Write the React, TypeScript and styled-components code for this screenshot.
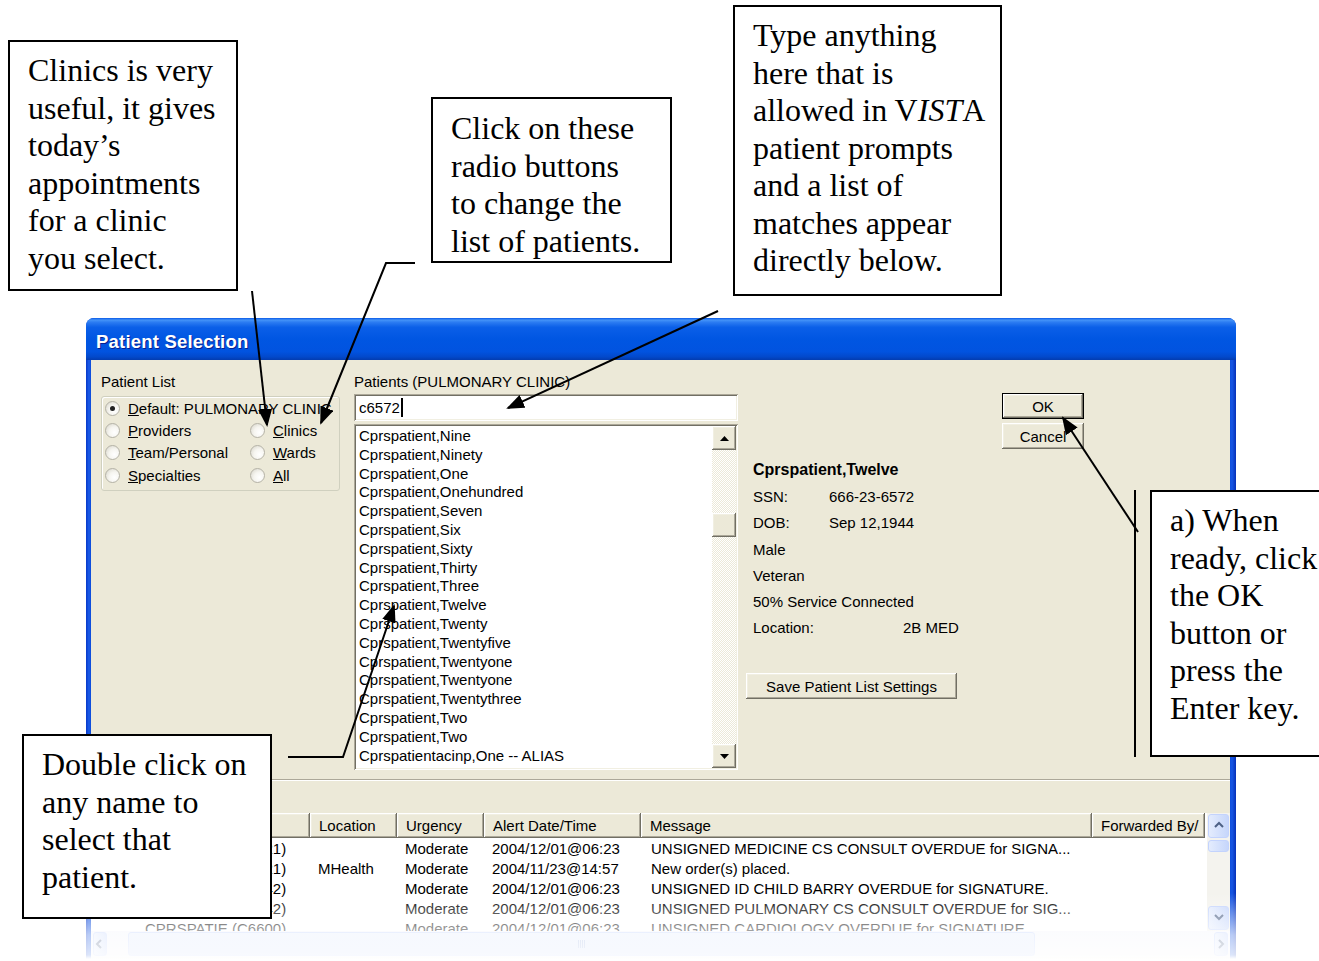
import React from "react";
import styled, { createGlobalStyle } from "styled-components";

const GlobalStyle = createGlobalStyle`
  html, body { margin: 0; padding: 0; background: #fff; }
  body { font-family: "Liberation Sans", Arial, sans-serif; }
`;

const beige = "#ECE9D8";

const raised = `
  background: ${beige};
  box-shadow: inset -1px -1px #716f64, inset 1px 1px #fff, inset -2px -2px #aca899, inset 2px 2px #f1efe2;
`;

const sunken = `
  box-shadow: inset 1px 1px #aca899, inset -1px -1px #fff, inset 2px 2px #716f64, inset -2px -2px #f1efe2;
`;

const Page = styled.div`
  position: relative;
  width: 1319px;
  height: 961px;
  overflow: hidden;
  background: #fff;
  padding: 318px 0 0 86px;
  box-sizing: border-box;
`;

const Window = styled.div`
  width: 1150px;
  height: 645px;
  display: flex;
  flex-direction: column;
  border-radius: 8px 8px 0 0;
  overflow: hidden;
  background: linear-gradient(to right, #0838c8 0px, #1a5cea 3px, #0a4ad8 5px, #0a4ad8 1143px, #1656e4 1146px, #0631b8 1150px);
`;

const TitleBar = styled.div`
  height: 42px;
  flex: none;
  padding: 14px 0 0 10px;
  box-sizing: border-box;
  background: linear-gradient(
    to bottom,
    #0a5ae8 0%,
    #4493f8 5%,
    #2c7cf2 10%,
    #0b5fe8 22%,
    #0056e2 50%,
    #0153e0 80%,
    #0249cc 92%,
    #033cb0 100%
  );
  color: #fff;
  font: bold 18.5px "Liberation Sans", Arial, sans-serif;
  letter-spacing: 0.2px;
  line-height: 20px;
  text-shadow: 1px 1px 0 #0a1f8f;
`;

const Body = styled.div`
  flex: 1;
  margin: 0 6px 0 5px;
  background: ${beige};
  display: flex;
  flex-direction: column;
  font-size: 15px;
  color: #000;
`;

const TopPane = styled.div`
  display: flex;
  height: 410px;
  padding: 13px 0 0 10px;
  box-sizing: border-box;
`;

const Column = styled.div<{ $w?: number; $mr?: number }>`
  display: flex;
  flex-direction: column;
  width: ${(p) => (p.$w ? `${p.$w}px` : "auto")};
  flex: ${(p) => (p.$w ? "none" : "1")};
  margin-right: ${(p) => p.$mr ?? 0}px;
`;

const Label = styled.div<{ $mb: number }>`
  height: 18px;
  line-height: 18px;
  margin-bottom: ${(p) => p.$mb}px;
  white-space: nowrap;
`;

const GroupBox = styled.div`
  height: 95px;
  border: 1px solid #d0d0bf;
  border-radius: 3px;
  box-shadow: inset 1px 1px #fff;
  box-sizing: border-box;
  padding: 0 0 0 3px;
  display: grid;
  grid-template-columns: 145px 1fr;
  grid-auto-rows: 22.3px;
  overflow: hidden;
`;

const RadioItem = styled.label<{ $span?: boolean }>`
  display: flex;
  align-items: center;
  gap: 8px;
  white-space: nowrap;
  grid-column: ${(p) => (p.$span ? "1 / span 2" : "auto")};
`;

const RadioCircle = styled.span<{ $on?: boolean }>`
  position: relative;
  width: 15px;
  height: 15px;
  flex: none;
  border-radius: 50%;
  border: 1px solid #b4b2a6;
  box-sizing: border-box;
  background: radial-gradient(circle at 65% 65%, #ffffff 0%, #f6f5f0 45%, #d4d2c6 100%);
  &::after {
    content: "";
    display: ${(p) => (p.$on ? "block" : "none")};
    position: absolute;
    left: 4px;
    top: 4px;
    width: 5px;
    height: 5px;
    border-radius: 50%;
    background: #222;
  }
`;

const TextInput = styled.div`
  height: 27px;
  margin-bottom: 3px;
  background: #fff;
  ${sunken}
  display: flex;
  align-items: center;
  padding-left: 5px;
  box-sizing: border-box;
`;

const Caret = styled.span`
  display: inline-block;
  width: 2px;
  height: 19px;
  background: #000;
  margin-left: 1px;
`;

const ListBox = styled.div`
  height: 346px;
  background: #fff;
  ${sunken}
  padding: 2px;
  box-sizing: border-box;
  display: flex;
`;

const ListItems = styled.div`
  flex: 1;
  overflow: hidden;
  padding: 1px 0 0 3px;
  line-height: 18.8px;
  white-space: nowrap;
`;

const ClassicScroll = styled.div`
  width: 24px;
  display: flex;
  flex-direction: column;
  background: repeating-conic-gradient(${beige} 0 25%, #fff 0 50%) 0 0 / 2px 2px;
`;

const ClassicButton = styled.div<{ $mt?: number }>`
  width: 24px;
  height: 24px;
  flex: none;
  margin-top: ${(p) => p.$mt ?? 0}px;
  ${raised}
  display: flex;
  align-items: center;
  justify-content: center;
`;

const DialogButton = styled.div<{ $default?: boolean; $w: number }>`
  width: ${(p) => p.$w}px;
  height: 26px;
  ${raised}
  border: ${(p) => (p.$default ? "1px solid #000" : "none")};
  box-sizing: border-box;
  display: flex;
  align-items: center;
  justify-content: center;
  white-space: nowrap;
`;

const ButtonStack = styled.div`
  display: flex;
  flex-direction: column;
  gap: 4px;
  margin: 20px 0 0 256px;
`;

const Info = styled.div`
  margin: 8px 0 0 7px;
  display: flex;
  flex-direction: column;
`;

const InfoRow = styled.div<{ $bold?: boolean }>`
  height: 26.3px;
  display: flex;
  align-items: center;
  white-space: nowrap;
  font-weight: ${(p) => (p.$bold ? "bold" : "normal")};
  font-size: ${(p) => (p.$bold ? "16px" : "15px")};
`;

const InfoKey = styled.span<{ $w: number }>`
  width: ${(p) => p.$w}px;
  flex: none;
`;

const SaveRow = styled.div`
  margin-top: 32px;
`;

const Splitter = styled.div`
  margin-top: 9px;
  height: 0;
  border-top: 1px solid #aca899;
  border-bottom: 1px solid #fff;
`;

const AlertsPane = styled.div`
  margin-top: 32px;
  display: flex;
  flex-direction: column;
`;

const AlertsMain = styled.div`
  display: flex;
  height: 118px;
`;

const Table = styled.div`
  flex: 1;
  background: #fff;
  overflow: hidden;
`;

const cols = "219px 87px 87px 157px 451px 113px";

const HeaderRow = styled.div`
  display: grid;
  grid-template-columns: ${cols};
  height: 25px;
`;

const HeaderCell = styled.div`
  ${raised}
  padding-left: 9px;
  line-height: 25px;
  white-space: nowrap;
  overflow: hidden;
`;

const Rows = styled.div`
  padding-top: 1px;
`;

const Row = styled.div`
  display: grid;
  grid-template-columns: ${cols};
  height: 20px;
  line-height: 20px;
`;

const Cell = styled.div<{ $pl?: number }>`
  padding-left: ${(p) => p.$pl ?? 8}px;
  white-space: nowrap;
  overflow: hidden;
`;

const XPScroll = styled.div`
  width: 23px;
  display: flex;
  flex-direction: column;
  background: #f4f3ee;
  padding: 1px 0;
  box-sizing: border-box;
`;

const XPButton = styled.div<{ $h?: number; $mt?: string }>`
  height: ${(p) => p.$h ?? 22}px;
  margin: 0 1px;
  margin-top: ${(p) => p.$mt ?? "0"};
  border: 1px solid #c3d3fd;
  border-radius: 3px;
  background: linear-gradient(to right, #e4ecfd, #c6d6fb);
  display: flex;
  align-items: center;
  justify-content: center;
  flex: none;
`;

const HScroll = styled.div`
  height: 26px;
  display: flex;
  background: #f3f5fb;
  padding: 1px;
  box-sizing: border-box;
  gap: 2px;
`;

const HThumb = styled.div`
  margin-left: 18px;
  width: 905px;
  border: 1px solid #c3d3fd;
  border-radius: 3px;
  background: linear-gradient(to bottom, #e6eefd, #cfdcfb);
  display: flex;
  align-items: center;
  justify-content: center;
`;

const Grip = styled.div`
  width: 8px;
  height: 8px;
  background: repeating-linear-gradient(to right, #9fb3e0 0 1px, transparent 1px 2px);
`;

const Spacer = styled.div`
  flex: 1;
`;

const Fade = styled.div`
  position: absolute;
  left: 0;
  right: 0;
  top: 893px;
  bottom: 0;
  background: linear-gradient(
    to bottom,
    rgba(255, 255, 255, 0) 0px,
    rgba(255, 255, 255, 0.35) 20px,
    rgba(255, 255, 255, 0.7) 42px,
    rgba(255, 255, 255, 0.85) 62px,
    #fff 66px
  );
`;

const Callout = styled.div<{ $x: number; $y: number; $w: number; $h: number; $pt?: number }>`
  position: absolute;
  left: ${(p) => p.$x}px;
  top: ${(p) => p.$y}px;
  width: ${(p) => p.$w}px;
  height: ${(p) => p.$h}px;
  box-sizing: border-box;
  border: 2px solid #000;
  background: #fff;
  padding: ${(p) => p.$pt ?? 10}px 0 0 18px;
  font-family: "Liberation Serif", "Times New Roman", serif;
  font-size: 32px;
  line-height: 37.5px;
  color: #000;
  white-space: nowrap;
  overflow: hidden;
`;

const ArrowLayer = styled.svg`
  position: absolute;
  left: 0;
  top: 0;
  pointer-events: none;
`;

const patients = [
  "Cprspatient,Nine",
  "Cprspatient,Ninety",
  "Cprspatient,One",
  "Cprspatient,Onehundred",
  "Cprspatient,Seven",
  "Cprspatient,Six",
  "Cprspatient,Sixty",
  "Cprspatient,Thirty",
  "Cprspatient,Three",
  "Cprspatient,Twelve",
  "Cprspatient,Twenty",
  "Cprspatient,Twentyfive",
  "Cprspatient,Twentyone",
  "Cprspatient,Twentyone",
  "Cprspatient,Twentythree",
  "Cprspatient,Two",
  "Cprspatient,Two",
  "Cprspatientacinp,One -- ALIAS",
  "Cprspatientacinp,Two -- ALIAS",
];

const alerts = [
  { who: "CPRSPATIE (C6621)", loc: "", date: "2004/12/01@06:23", msg: "UNSIGNED MEDICINE CS CONSULT OVERDUE for SIGNA..." },
  { who: "CPRSPATIE (C6621)", loc: "MHealth", date: "2004/11/23@14:57", msg: "New order(s) placed." },
  { who: "CPRSPATIE (C6642)", loc: "", date: "2004/12/01@06:23", msg: "UNSIGNED ID CHILD BARRY OVERDUE for SIGNATURE." },
  { who: "CPRSPATIE (C6642)", loc: "", date: "2004/12/01@06:23", msg: "UNSIGNED PULMONARY CS CONSULT OVERDUE for SIG..." },
  { who: "CPRSPATIE (C6600)", loc: "", date: "2004/12/01@06:23", msg: "UNSIGNED CARDIOLOGY OVERDUE for SIGNATURE." },
];

const Tri = ({ down }: { down?: boolean }) => (
  <svg width="9" height="5" viewBox="0 0 9 5">
    <polygon points={down ? "0,0 9,0 4.5,5" : "0,5 9,5 4.5,0"} fill="#000" />
  </svg>
);

const Chevron = ({ dir }: { dir: "up" | "down" | "left" | "right" }) => {
  const pts = {
    up: "2,7 6,3 10,7",
    down: "2,3 6,7 10,3",
    left: "7,2 3,6 7,10",
    right: "4,2 8,6 4,10",
  }[dir];
  return (
    <svg width="12" height="12" viewBox="0 0 12 12">
      <polyline points={pts} fill="none" stroke="#4d6185" strokeWidth="2" />
    </svg>
  );
};

export default function App() {
  return (
    <Page>
      <GlobalStyle />
      <Window>
        <TitleBar>Patient Selection</TitleBar>
        <Body>
          <TopPane>
            <Column $w={239} $mr={14}>
              <Label $mb={5}>Patient List</Label>
              <GroupBox>
                <RadioItem $span>
                  <RadioCircle $on />
                  <span>
                    <u>D</u>efault: PULMONARY CLINIC
                  </span>
                </RadioItem>
                <RadioItem>
                  <RadioCircle />
                  <span>
                    <u>P</u>roviders
                  </span>
                </RadioItem>
                <RadioItem>
                  <RadioCircle />
                  <span>
                    <u>C</u>linics
                  </span>
                </RadioItem>
                <RadioItem>
                  <RadioCircle />
                  <span>
                    <u>T</u>eam/Personal
                  </span>
                </RadioItem>
                <RadioItem>
                  <RadioCircle />
                  <span>
                    <u>W</u>ards
                  </span>
                </RadioItem>
                <RadioItem>
                  <RadioCircle />
                  <span>
                    <u>S</u>pecialties
                  </span>
                </RadioItem>
                <RadioItem>
                  <RadioCircle />
                  <span>
                    <u>A</u>ll
                  </span>
                </RadioItem>
              </GroupBox>
            </Column>

            <Column $w={384} $mr={8}>
              <Label $mb={3}>Patients (PULMONARY CLINIC)</Label>
              <TextInput>
                c6572
                <Caret />
              </TextInput>
              <ListBox>
                <ListItems>
                  {patients.map((p, i) => (
                    <div key={i}>{p}</div>
                  ))}
                </ListItems>
                <ClassicScroll>
                  <ClassicButton>
                    <Tri />
                  </ClassicButton>
                  <ClassicButton $mt={63} />
                  <ClassicButton $mt={207}>
                    <Tri down />
                  </ClassicButton>
                </ClassicScroll>
              </ListBox>
            </Column>

            <Column>
              <ButtonStack>
                <DialogButton $default $w={82}>
                  OK
                </DialogButton>
                <DialogButton $w={82}>Cancel</DialogButton>
              </ButtonStack>
              <Info>
                <InfoRow $bold>Cprspatient,Twelve</InfoRow>
                <InfoRow>
                  <InfoKey $w={76}>SSN:</InfoKey>666-23-6572
                </InfoRow>
                <InfoRow>
                  <InfoKey $w={76}>DOB:</InfoKey>Sep 12,1944
                </InfoRow>
                <InfoRow>Male</InfoRow>
                <InfoRow>Veteran</InfoRow>
                <InfoRow>50% Service Connected</InfoRow>
                <InfoRow>
                  <InfoKey $w={150}>Location:</InfoKey>2B MED
                </InfoRow>
              </Info>
              <SaveRow>
                <DialogButton $w={211}>Save Patient List Settings</DialogButton>
              </SaveRow>
            </Column>
          </TopPane>

          <Splitter />

          <AlertsPane>
            <AlertsMain>
              <Table>
                <HeaderRow>
                  <HeaderCell />
                  <HeaderCell>Location</HeaderCell>
                  <HeaderCell>Urgency</HeaderCell>
                  <HeaderCell>Alert Date/Time</HeaderCell>
                  <HeaderCell>Message</HeaderCell>
                  <HeaderCell>Forwarded By/</HeaderCell>
                </HeaderRow>
                <Rows>
                  {alerts.map((a, i) => (
                    <Row key={i}>
                      <Cell $pl={54}>{a.who}</Cell>
                      <Cell>{a.loc}</Cell>
                      <Cell>Moderate</Cell>
                      <Cell>{a.date}</Cell>
                      <Cell $pl={10}>{a.msg}</Cell>
                      <Cell />
                    </Row>
                  ))}
                </Rows>
              </Table>
              <XPScroll>
                <XPButton>
                  <Chevron dir="up" />
                </XPButton>
                <XPButton $h={10} $mt="2px" />
                <XPButton $mt="auto">
                  <Chevron dir="down" />
                </XPButton>
              </XPScroll>
            </AlertsMain>
            <HScroll>
              <XPButton $h={22}>
                <Chevron dir="left" />
              </XPButton>
              <HThumb>
                <Grip />
              </HThumb>
              <Spacer />
              <XPButton $h={22}>
                <Chevron dir="right" />
              </XPButton>
            </HScroll>
          </AlertsPane>
        </Body>
      </Window>

      <Fade />

      <ArrowLayer width="1319" height="961" viewBox="0 0 1319 961">
        <defs>
          <marker
            id="head"
            markerUnits="userSpaceOnUse"
            markerWidth="18"
            markerHeight="14"
            refX="16"
            refY="7"
            orient="auto"
          >
            <path d="M0,0 L18,7 L0,14 z" fill="#000" />
          </marker>
        </defs>
        <g fill="none" stroke="#000" strokeWidth="2">
          <path d="M252,291 L267,425" markerEnd="url(#head)" />
          <path d="M415,263 L386,263 L321,423" markerEnd="url(#head)" />
          <path d="M718,311 L508,408" markerEnd="url(#head)" />
          <path d="M1138,532 L1063,418" markerEnd="url(#head)" />
          <path d="M288,757 L343,757 L394,606" markerEnd="url(#head)" />
          <path d="M1135,490 L1135,757" />
        </g>
      </ArrowLayer>

      <Callout $x={8} $y={40} $w={230} $h={251}>
        Clinics is very
        <br />
        useful, it gives
        <br />
        today’s
        <br />
        appointments
        <br />
        for a clinic
        <br />
        you select.
      </Callout>
      <Callout $x={431} $y={97} $w={241} $h={166} $pt={11}>
        Click on these
        <br />
        radio buttons
        <br />
        to change the
        <br />
        list of patients.
      </Callout>
      <Callout $x={733} $y={5} $w={269} $h={291}>
        Type anything
        <br />
        here that is
        <br />
        allowed in V<i>IST</i>A
        <br />
        patient prompts
        <br />
        and a list of
        <br />
        matches appear
        <br />
        directly below.
      </Callout>
      <Callout $x={1150} $y={490} $w={200} $h={267}>
        a) When
        <br />
        ready, click
        <br />
        the OK
        <br />
        button or
        <br />
        press the
        <br />
        Enter key.
      </Callout>
      <Callout $x={22} $y={734} $w={250} $h={185}>
        Double click on
        <br />
        any name to
        <br />
        select that
        <br />
        patient.
      </Callout>
    </Page>
  );
}
